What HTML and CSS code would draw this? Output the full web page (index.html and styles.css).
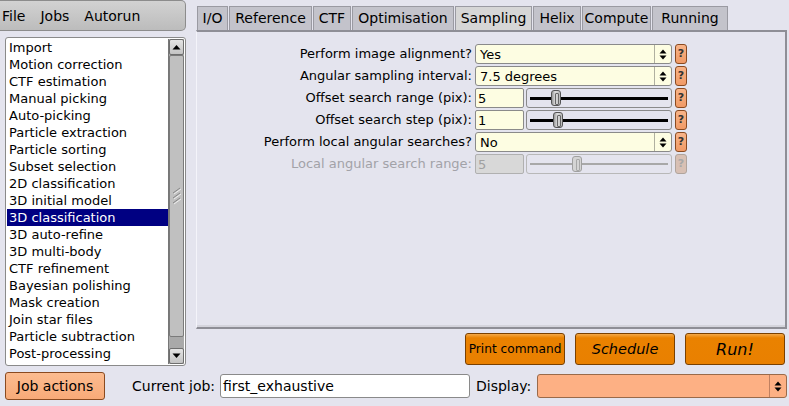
FILE: index.html
```html
<!DOCTYPE html>
<html>
<head>
<meta charset="utf-8">
<link rel="stylesheet" href="styles.css">
</head>
<body>
<div class="app">
  <div class="top">
    <div class="left">
      <div class="menubar"><span>File</span><span>Jobs</span><span>Autorun</span></div>
      <div class="browser">
        <ul class="items">
          <li>Import</li>
          <li>Motion correction</li>
          <li>CTF estimation</li>
          <li>Manual picking</li>
          <li>Auto-picking</li>
          <li>Particle extraction</li>
          <li>Particle sorting</li>
          <li>Subset selection</li>
          <li>2D classification</li>
          <li>3D initial model</li>
          <li class="sel">3D classification</li>
          <li>3D auto-refine</li>
          <li>3D multi-body</li>
          <li>CTF refinement</li>
          <li>Bayesian polishing</li>
          <li>Mask creation</li>
          <li>Join star files</li>
          <li>Particle subtraction</li>
          <li>Post-processing</li>
        </ul>
        <div class="scrollbar">
          <div class="sbtn"><svg width="9" height="6" viewBox="0 0 9 6"><path d="M0.5 5.5 L4.5 1 L8.5 5.5 Z" fill="#000"/></svg></div>
          <div class="track">
            <div class="thumb"><svg width="10" height="18" viewBox="0 0 10 18"><path d="M1 6 L8 1 M1 11 L8 6 M1 16 L8 11" stroke="#888" stroke-width="1"/><path d="M2 7 L9 2 M2 12 L9 7 M2 17 L9 12" stroke="#eee" stroke-width="1"/></svg></div>
          </div>
          <div class="sbtn"><svg width="9" height="6" viewBox="0 0 9 6"><path d="M0.5 0.5 L4.5 5 L8.5 0.5 Z" fill="#000"/></svg></div>
        </div>
      </div>
    </div>
    <div class="right">
      <div class="tabs">
        <div class="tab t1">I/O</div>
        <div class="tab t2">Reference</div>
        <div class="tab t3">CTF</div>
        <div class="tab t4">Optimisation</div>
        <div class="tab t5 active">Sampling</div>
        <div class="tab t6">Helix</div>
        <div class="tab t7">Compute</div>
        <div class="tab t8">Running</div>
      </div>
      <div class="panel">
        <div class="form">
          <div class="label">Perform image alignment?</div>
          <div class="choice"><span>Yes</span><i class="arrows"><svg width="8" height="11" viewBox="0 0 8 11"><path d="M0.5 4.5 L4 0.5 L7.5 4.5 Z M0.5 6.5 L4 10.5 L7.5 6.5 Z" fill="#000"/></svg></i></div>
          <div class="help">?</div>

          <div class="label">Angular sampling interval:</div>
          <div class="choice"><span>7.5 degrees</span><i class="arrows"><svg width="8" height="11" viewBox="0 0 8 11"><path d="M0.5 4.5 L4 0.5 L7.5 4.5 Z M0.5 6.5 L4 10.5 L7.5 6.5 Z" fill="#000"/></svg></i></div>
          <div class="help">?</div>

          <div class="label">Offset search range (pix):</div>
          <div class="slidefield"><div class="num">5</div><div class="slider"><div class="line"></div><div class="knob" style="left:24px"></div></div></div>
          <div class="help">?</div>

          <div class="label">Offset search step (pix):</div>
          <div class="slidefield"><div class="num">1</div><div class="slider"><div class="line"></div><div class="knob" style="left:26px"></div></div></div>
          <div class="help">?</div>

          <div class="label">Perform local angular searches?</div>
          <div class="choice"><span>No</span><i class="arrows"><svg width="8" height="11" viewBox="0 0 8 11"><path d="M0.5 4.5 L4 0.5 L7.5 4.5 Z M0.5 6.5 L4 10.5 L7.5 6.5 Z" fill="#000"/></svg></i></div>
          <div class="help">?</div>

          <div class="label dis">Local angular search range:</div>
          <div class="slidefield dis"><div class="num">5</div><div class="slider"><div class="line"></div><div class="knob" style="left:45px"></div></div></div>
          <div class="help dis">?</div>
        </div>
      </div>
      <div class="actions">
        <div class="obtn print">Print command</div>
        <div class="obtn sched">Schedule</div>
        <div class="obtn run">Run!</div>
      </div>
    </div>
  </div>
  <div class="bottom">
    <div class="jobactions">Job actions</div>
    <div class="curlabel">Current job:</div>
    <div class="curinput">first_exhaustive</div>
    <div class="displabel">Display:</div>
    <div class="dispchoice"><i class="arrows"><svg width="8" height="11" viewBox="0 0 8 11"><path d="M0.5 4.5 L4 0.5 L7.5 4.5 Z M0.5 6.5 L4 10.5 L7.5 6.5 Z" fill="#000"/></svg></i></div>
  </div>
</div>
</body>
</html>
```
FILE: styles.css
```css
* { box-sizing: border-box; }
html, body { margin: 0; padding: 0; }
body {
  background: #e4e4ee;
  font-family: "DejaVu Sans", sans-serif;
  font-size: 13px;
  color: #000;
  width: 789px;
  height: 406px;
  overflow: hidden;
}
.app { display: flex; flex-direction: column; }
.top { display: flex; height: 366px; }
.left { width: 196px; display: flex; flex-direction: column; }
.menubar {
  width: 186px;
  height: 31px;
  background: linear-gradient(#d2d2d2, #bcbcbc);
  border: 1px solid #8c8c8c;
  border-left: none;
  border-radius: 0 5px 5px 0;
  display: flex;
  align-items: center;
  padding-left: 2px;
  gap: 15px;
  font-size: 14px;
}
.browser {
  margin: 6px 0 0 5px;
  width: 181px;
  height: 329px;
  background: #fff;
  border: 1px solid #8a8a8a;
  border-radius: 3px;
  display: flex;
  padding: 1px;
}
.items {
  list-style: none;
  margin: 0;
  padding: 0;
  flex: 1;
  overflow: hidden;
}
.items li {
  height: 17px;
  line-height: 17px;
  padding-left: 2px;
  white-space: nowrap;
}
.items li.sel { background: #000082; color: #fff; }
.scrollbar {
  width: 16px;
  display: flex;
  flex-direction: column;
  background: #a9a9a9;
  border-left: 1px solid #777;
}
.sbtn {
  height: 16px;
  background: linear-gradient(#e4e4e4, #c4c4c4);
  border: 1px solid #6e6e6e;
  border-radius: 2px;
  display: flex;
  align-items: center;
  justify-content: center;
}
.track { flex: 1; display: flex; flex-direction: column; padding-bottom: 11px; }
.thumb {
  flex: 1;
  background: #c0c0c0;
  border: 1px solid #7a7a7a;
  border-radius: 2px;
  display: flex;
  align-items: center;
  justify-content: center;
}
.right { flex: 1; display: flex; flex-direction: column; padding-top: 6px; }
.tabs { display: flex; height: 24px; gap: 1px; padding-left: 1px; }
.tab {
  height: 24px;
  line-height: 23px;
  text-align: center;
  background: #c3c3cb;
  border: 1px solid #9a9aa2;
  border-bottom: none;
  font-size: 14px;
  white-space: nowrap;
}
.t1 { width: 31px; }
.t2 { width: 83px; }
.t3 { width: 38px; }
.t4 { width: 102px; }
.t5 { width: 77px; }
.t6 { width: 48px; }
.t7 { width: 69px; }
.t8 { width: 76px; }
.tab.active { background: #d6d6d6; }
.panel {
  height: 299px;
  width: 591px;
  border-top: 2px solid #8e8e96;
  border-right: 2px solid #8e8e96;
  border-bottom: 2px solid #8e8e96;
  border-left: 1px solid #f4f4fa;
  box-shadow: inset 0 -2px 0 #d4d4dc;
  padding-top: 12px;
}
.form {
  display: grid;
  grid-template-columns: 275px 197px 12px;
  column-gap: 3px;
  row-gap: 2px;
  grid-auto-rows: 20px;
}
.label {
  text-align: right;
  line-height: 20px;
  white-space: nowrap;
}
.label.dis { color: #a2a2a8; }
.choice {
  background: #fdfde2;
  border: 1px solid #8a8a8a;
  border-radius: 3px;
  display: flex;
  align-items: center;
  padding-left: 4px;
}
.choice span { flex: 1; }
.arrows {
  width: 17px;
  height: 100%;
  border-left: 1px solid #b0b0a0;
  display: flex;
  align-items: center;
  justify-content: center;
}
.help {
  background: linear-gradient(#f8b488, #f09a66);
  border: 1px solid #8a4a20;
  border-radius: 3px;
  text-align: center;
  line-height: 18px;
  font-size: 11px;
  font-weight: bold;
  color: #333;
}
.help.dis { background: #d8c0b4; border-color: #b0a49c; color: #a8a8a8; }
.slidefield { display: flex; gap: 2px; }
.num {
  width: 49px;
  background: #fdfde2;
  border: 1px solid #8a8a8a;
  border-radius: 2px;
  padding-left: 2px;
  line-height: 19px;
}
.slider {
  flex: 1;
  position: relative;
  border: 1px solid #8a8a8a;
  border-radius: 3px;
}
.line {
  position: absolute;
  left: 3px;
  right: 3px;
  top: 8px;
  height: 3px;
  background: #000;
}
.knob {
  position: absolute;
  top: 1px;
  width: 10px;
  height: 16px;
  background: linear-gradient(90deg, #999, #ddd 40%, #bbb);
  border: 1px solid #555;
  border-radius: 3px;
}
.knob::after {
  content: "";
  position: absolute;
  left: 3px;
  top: 2px;
  width: 2px;
  height: 10px;
  border: 1px solid #666;
  border-radius: 1px;
}
.slidefield.dis .num { background: #d8d8d8; border-color: #b0b0b0; color: #a0a0a0; }
.slidefield.dis .slider { border-color: #b8b8b8; }
.slidefield.dis .line { background: #a8a8a8; height: 2px; }
.slidefield.dis .knob { border-color: #a0a0a0; background: #d4d4d4; }
.slidefield.dis .knob::after { border-color: #a8a8a8; }
.actions {
  display: flex;
  justify-content: flex-end;
  gap: 10px;
  margin-top: 4px;
  padding-right: 4px;
}
.obtn {
  width: 100px;
  height: 32px;
  background: linear-gradient(#f4a848 0, #ea8200 4px, #e98000);
  border: 1px solid #7a4000;
  border-radius: 3px;
  display: flex;
  align-items: center;
  justify-content: center;
}
.print { font-size: 12.2px; }
.sched { font-style: italic; font-size: 14.5px; }
.run { font-style: italic; font-size: 16px; }
.bottom {
  display: flex;
  align-items: center;
  height: 40px;
  padding-bottom: 6px;
  padding-top: 6px;
  font-size: 14px;
}
.jobactions {
  margin-left: 5px;
  width: 100px;
  height: 28px;
  background: linear-gradient(#fcbc90, #f8aa78);
  border: 1px solid #8a4a20;
  border-radius: 3px;
  display: flex;
  align-items: center;
  justify-content: center;
}
.curlabel { margin-left: 27px; width: 88px; }
.curinput {
  width: 250px;
  height: 24px;
  background: #fff;
  border: 1px solid #8a8a8a;
  border-radius: 3px;
  line-height: 22px;
  padding-left: 2px;
}
.displabel { margin-left: 6px; width: 61px; }
.dispchoice {
  width: 250px;
  height: 24px;
  background: #fdb084;
  border: 1px solid #9a6a4a;
  border-radius: 3px;
  display: flex;
  justify-content: flex-end;
}
.dispchoice .arrows { border-left-color: #c08060; }
```
